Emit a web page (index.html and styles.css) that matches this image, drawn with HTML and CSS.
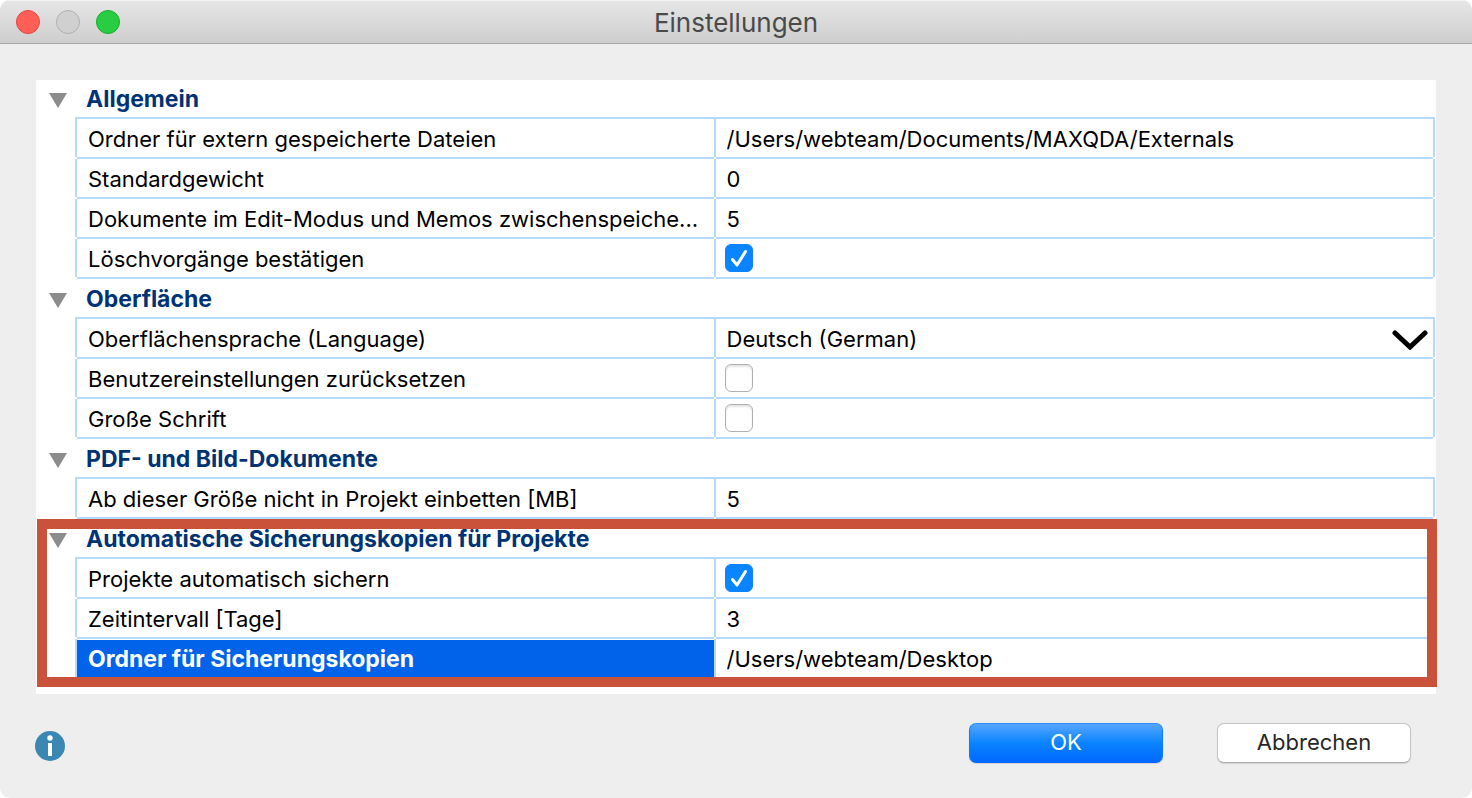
FILE: index.html
```html
<!DOCTYPE html>
<html lang="de">
<head>
  <meta charset="UTF-8">
  <meta name="viewport" content="width=device-width, initial-scale=1.0">
  <title>Einstellungen</title>
  <link rel="stylesheet" href="styles.css">
</head>
<body>
  <div class="window">
    <header class="titlebar">
      <div class="window-buttons">
        <button class="dot close" type="button" aria-label="Schließen"></button>
        <button class="dot minimize" type="button" aria-label="Minimieren" disabled></button>
        <button class="dot maximize" type="button" aria-label="Maximieren"></button>
      </div>
      <h1>Einstellungen</h1>
    </header>

    <form class="content">
      <div class="panel">
        <section class="group">
          <button class="group-header" type="button" aria-expanded="true">
            <svg width="18" height="18" viewBox="0 0 18 18"><path d="M0 3h18L9 18z" fill="#8c8c8c"/></svg>
            Allgemein
          </button>
          <table>
            <tr>
              <th><label for="externals">Ordner für extern gespeicherte Dateien</label></th>
              <td><input type="text" id="externals" value="/Users/webteam/Documents/MAXQDA/Externals"></td>
            </tr>
            <tr>
              <th><label for="weight">Standardgewicht</label></th>
              <td><input type="text" id="weight" value="0"></td>
            </tr>
            <tr>
              <th><label for="autosave">Dokumente im Edit-Modus und Memos zwischenspeiche...</label></th>
              <td><input type="text" id="autosave" value="5"></td>
            </tr>
            <tr>
              <th><label for="confirm">Löschvorgänge bestätigen</label></th>
              <td><span class="check"><input type="checkbox" id="confirm" checked><svg viewBox="0 0 28 28"><path d="M7.500 15.500l4.500 5.500 8.500-13.500"/></svg></span></td>
            </tr>
          </table>
        </section>

        <section class="group">
          <button class="group-header" type="button" aria-expanded="true">
            <svg width="18" height="18" viewBox="0 0 18 18"><path d="M0 3h18L9 18z" fill="#8c8c8c"/></svg>
            Oberfläche
          </button>
          <table>
            <tr>
              <th><label for="language">Oberflächensprache (Language)</label></th>
              <td>
                <select id="language">
                  <option selected>Deutsch (German)</option>
                </select>
                <svg class="chevron" width="36" height="20" viewBox="0 0 36 20"><path d="M3 3l15 14L33 3"/></svg>
              </td>
            </tr>
            <tr>
              <th><label for="reset">Benutzereinstellungen zurücksetzen</label></th>
              <td><span class="check"><input type="checkbox" id="reset"></span></td>
            </tr>
            <tr>
              <th><label for="large-font">Große Schrift</label></th>
              <td><span class="check"><input type="checkbox" id="large-font"></span></td>
            </tr>
          </table>
        </section>

        <section class="group">
          <button class="group-header" type="button" aria-expanded="true">
            <svg width="18" height="18" viewBox="0 0 18 18"><path d="M0 3h18L9 18z" fill="#8c8c8c"/></svg>
            PDF- und Bild-Dokumente
          </button>
          <table>
            <tr>
              <th><label for="embed-size">Ab dieser Größe nicht in Projekt einbetten [MB]</label></th>
              <td><input type="text" id="embed-size" value="5"></td>
            </tr>
          </table>
        </section>

        <section class="group highlighted">
          <button class="group-header" type="button" aria-expanded="true">
            <svg width="18" height="18" viewBox="0 0 18 18"><path d="M0 3h18L9 18z" fill="#8c8c8c"/></svg>
            Automatische Sicherungskopien für Projekte
          </button>
          <table>
            <tr>
              <th><label for="backup">Projekte automatisch sichern</label></th>
              <td><span class="check"><input type="checkbox" id="backup" checked><svg viewBox="0 0 28 28"><path d="M7.500 15.500l4.500 5.500 8.500-13.500"/></svg></span></td>
            </tr>
            <tr>
              <th><label for="interval">Zeitintervall [Tage]</label></th>
              <td><input type="text" id="interval" value="3"></td>
            </tr>
            <tr class="selected">
              <th><label for="backup-folder">Ordner für Sicherungskopien</label></th>
              <td><input type="text" id="backup-folder" value="/Users/webteam/Desktop"></td>
            </tr>
          </table>
        </section>
      </div>

      <footer class="footer">
        <button class="info" type="button" aria-label="Hilfe">
          <svg width="30" height="30" viewBox="0 0 30 30">
            <circle cx="15" cy="15" r="15" fill="#3a87b4"/>
            <circle cx="15" cy="7" r="2.700" fill="#fff"/>
            <path d="M13 12h4v13h-4z" fill="#fff"/>
          </svg>
        </button>
        <button class="btn btn-primary" type="submit">OK</button>
        <button class="btn" type="button">Abbrechen</button>
      </footer>
    </form>
  </div>
</body>
</html>
```
FILE: styles.css
```css
* {
  box-sizing: border-box;
}

body {
  margin: 0;
  background-color: #fff;
  font-family: Inter, 'Liberation Sans', sans-serif;
  font-size: 22px;
  color: #000;
}

button, input, select {
  font: inherit;
  color: inherit;
}

.window {
  min-height: 100vh;
  display: flex;
  flex-direction: column;
  background-color: #eee;
  border-radius: 10px;
  overflow: hidden;
}

/* Title bar */
.titlebar {
  display: grid;
  grid-template-columns: 1fr auto 1fr;
  align-items: center;
  height: 44px;
  padding: 0 16px;
  background: linear-gradient(#e6e6e6, #cecece);
  border-bottom: 1px solid #a6a6a6;
  box-shadow: inset 0 1px #f5f5f5;
}

.titlebar h1 {
  margin: 0;
  padding-top: 2px;
  font-size: 26px;
  font-weight: 400;
  line-height: 32px;
  color: #4a4a4a;
}

.window-buttons {
  display: flex;
  gap: 16px;
}

.dot {
  width: 24px;
  height: 24px;
  padding: 0;
  border: 1px solid #e2463f;
  border-radius: 50%;
  background-color: #ff5f57;
}

.dot.minimize {
  border-color: #b0b0b0;
  background-color: #d0d0d0;
}

.dot.maximize {
  border-color: #1aab29;
  background-color: #28cd41;
}

/* Settings list */
.content {
  padding: 36px 36px 0;
}

.panel {
  background-color: #fff;
  padding-bottom: 15px;
}

.group {
  position: relative;
}

.group + .group {
  margin-top: 1px;
}

.group-header {
  display: flex;
  align-items: center;
  gap: 19px;
  width: 100%;
  height: 37px;
  padding: 0 13px;
  border: none;
  background: none;
  font-size: 23px;
  font-weight: 700;
  color: #003374;
  text-align: left;
}

table {
  width: calc(100% - 40px);
  margin-left: 39px;
  table-layout: fixed;
  border-spacing: 0;
  border-top: 2px solid #b5daff;
}

th, td {
  position: relative;
  height: 40px;
  padding: 0;
  border-right: 2px solid #b5daff;
  border-bottom: 2px solid #b5daff;
  font-weight: 400;
  text-align: left;
}

th {
  width: 47.1%;
  border-left: 2px solid #b5daff;
}

/* white gaps where the grid lines meet */
th::before, th::after, td::after {
  content: '';
  position: absolute;
  bottom: -2px;
  width: 2px;
  height: 2px;
  background-color: #fff;
}

th::before {
  left: -2px;
}

th::after, td::after {
  right: -2px;
}

th label {
  display: block;
  height: 38px;
  padding: 0 11px;
  line-height: 40px;
  white-space: nowrap;
}

td input[type="text"], select {
  display: block;
  width: 100%;
  height: 38px;
  padding: 2px 11px 0;
  border: none;
  outline: none;
  background: none;
  appearance: none;
}

.chevron {
  position: absolute;
  top: 11px;
  right: 5px;
  fill: none;
  stroke: #000;
  stroke-width: 5;
  stroke-linecap: round;
  pointer-events: none;
}

.selected th label {
  background-color: #0063e9;
  border-top: 1px solid #fff;
  color: #fff;
  font-size: 23px;
  font-weight: 700;
  line-height: 38px;
}

.check {
  position: relative;
  display: block;
  width: 28px;
  height: 28px;
  margin: 0 9px;
}

.check input {
  display: block;
  width: 28px;
  height: 28px;
  margin: 0;
  border: 1px solid #b0b0b0;
  border-radius: 6px;
  background-color: #fff;
  box-shadow: inset 0 2px 2px #e4e4e4;
  appearance: none;
}

.check input:checked {
  border-color: #0a84ff;
  background-color: #0a84ff;
  box-shadow: none;
}

.check svg {
  position: absolute;
  inset: 0;
  fill: none;
  stroke: #fff;
  stroke-width: 3;
  stroke-linecap: round;
  stroke-linejoin: round;
  pointer-events: none;
}

/* red frame around the backup settings */
.highlighted::after {
  content: '';
  position: absolute;
  inset: -1px -1px -8px 1px;
  border: 10px solid #ca523b;
  pointer-events: none;
}

/* Footer */
.footer {
  display: flex;
  align-items: center;
  gap: 54px;
  padding: 29px 25px 34px 0;
}

.info {
  height: 30px;
  margin-right: auto;
  margin-left: -1px;
  margin-top: 6px;
  padding: 0;
  border: none;
  background: none;
}

.info svg {
  display: block;
}

.btn {
  width: 194px;
  height: 40px;
  padding: 0 0 2px;
  border: 1px solid #c4c4c4;
  border-bottom-color: #acacac;
  border-radius: 7px;
  background-color: #fff;
  box-shadow: 0 1px 1px #d4d4d4;
  color: #272727;
}

.btn-primary {
  border-color: #2d8fff #0a7cff #0066ff;
  background: linear-gradient(#57a5ff, #0a84ff 50%, #0068ff);
  color: #fff;
}
```
